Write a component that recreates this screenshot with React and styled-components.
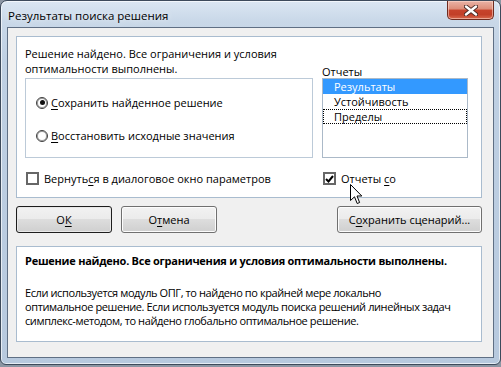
import React from "react";
import styled, { createGlobalStyle } from "styled-components";

const GlobalStyle = createGlobalStyle`
  html, body {
    margin: 0;
    padding: 0;
    background: #8c96a3;
  }
  body {
    font-family: "Open Sans", "Noto Sans", "Liberation Sans", sans-serif;
    font-size: 11px;
    color: #000;
  }
`;

const Frame = styled.div`
  position: relative;
  width: 501px;
  height: 365px;
  box-sizing: border-box;
  border: 1px solid #3d4a5b;
  border-radius: 7px 7px 6px 6px;
  background: linear-gradient(
    180deg,
    #dbe6f2 0px,
    #c9d8e8 20px,
    #bfd0e3 60px,
    #b7c9de 100%
  );
  box-shadow: inset 0 0 0 1px rgba(255, 255, 255, 0.65);
  padding: 0 6px 6px 6px;
  display: flex;
  flex-direction: column;
`;

const TitleBar = styled.div`
  height: 27px;
  display: flex;
  align-items: flex-start;
  padding-left: 1px;
`;

const Title = styled.div`
  margin-top: 7px;
  font-size: 11.5px;
  line-height: 15px;
  color: #000;
  text-shadow: 0 0 6px rgba(255, 255, 255, 0.9);
`;

const CloseButton = styled.div`
  margin-left: auto;
  width: 47px;
  height: 19px;
  box-sizing: border-box;
  border: 1px solid #6e2b1f;
  border-top: none;
  border-radius: 0 0 5px 5px;
  background: linear-gradient(
    180deg,
    #e9b3a6 0%,
    #dc8c78 45%,
    #c7432c 50%,
    #c23f28 75%,
    #d8694e 100%
  );
  box-shadow: inset 0 0 0 1px rgba(255, 220, 210, 0.55);
  display: flex;
  align-items: center;
  justify-content: center;
`;

const Client = styled.div`
  flex: 1;
  border: 1px solid #5f6f84;
  background: #f0f0f0;
  padding: 8px 11px 15px 8px;
  display: flex;
  flex-direction: column;
`;

const Panel = styled.div`
  box-sizing: border-box;
  height: ${(p) => p.$height}px;
  border: 1px solid #a9bccf;
  background: #fff;
`;

const TopGrid = styled.div`
  display: grid;
  grid-template-columns: 288px 146px;
  grid-template-rows: 32px 80px auto;
  column-gap: 9px;
  padding: 9px 13px 0 8px;
`;

const Message = styled.div`
  line-height: 15px;
  padding-top: 0;
`;

const ListLabel = styled.div`
  align-self: end;
  line-height: 15px;
  margin-bottom: -1px;
`;

const GroupBox = styled.div`
  box-sizing: border-box;
  border: 1px solid #bccad8;
  display: flex;
  flex-direction: column;
  gap: 18px;
  padding: 16px 0 0 10px;
`;

const OptionRow = styled.div`
  display: flex;
  align-items: center;
  gap: 3px;
  height: 15px;
  line-height: 15px;
`;

const Radio = styled.span`
  width: 12px;
  height: 12px;
  box-sizing: border-box;
  border-radius: 50%;
  border: 1px solid #3e3e3e;
  box-shadow: inset 0 0 0 1px #9a9a9a;
  background: #fff;
  display: flex;
  align-items: center;
  justify-content: center;

  &::after {
    content: "";
    display: ${(p) => (p.$checked ? "block" : "none")};
    width: 5px;
    height: 5px;
    border-radius: 50%;
    background: #111;
  }
`;

const Check = styled.span`
  width: 13px;
  height: 13px;
  box-sizing: border-box;
  border: 2px solid #676767;
  background: #fff;
  display: flex;
  align-items: center;
  justify-content: center;
`;

const ListBox = styled.div`
  box-sizing: border-box;
  border: 1px solid #abb9c8;
  background: #fff;
  display: flex;
  flex-direction: column;
`;

const ListItem = styled.div`
  height: 15px;
  box-sizing: border-box;
  line-height: 13px;
  padding-left: 10px;
  background: ${(p) => (p.$selected ? "#3399ff" : "transparent")};
  color: ${(p) => (p.$selected ? "#fff" : "#000")};
  border: 1px dotted ${(p) => (p.$focused ? "#000" : "transparent")};
`;

const CheckRow = styled(OptionRow)`
  margin-top: 13px;
  margin-left: 1px;
  gap: 5px;
`;

const ButtonRow = styled.div`
  display: flex;
  gap: 9px;
  margin-top: 8px;
  height: 27px;
`;

const Button = styled.div`
  box-sizing: border-box;
  width: ${(p) => p.$width}px;
  height: 27px;
  border: 1px solid ${(p) => (p.$default ? "#1d1d1d" : "#707070")};
  border-radius: 3px;
  background: linear-gradient(180deg, #f2f2f2 0%, #ebebeb 49%, #dddddd 50%, #cfcfcf 100%);
  box-shadow: inset 0 0 0 1px ${(p) => (p.$default ? "#e8e8e8" : "#fcfcfc")};
  display: flex;
  align-items: center;
  justify-content: center;
  margin-left: ${(p) => (p.$right ? "auto" : "0")};
`;

const Note = styled(Panel)`
  margin-top: 13px;
  padding: 6px 8px 0 8px;
  line-height: 15px;
`;

const NoteTitle = styled.div`
  font-weight: 700;
  letter-spacing: -0.25px;
`;

const NoteText = styled.div`
  margin-top: 18px;
  line-height: 14px;
  letter-spacing: -0.4px;
  white-space: nowrap;
`;

const Cursor = styled.svg`
  position: absolute;
  left: 349px;
  top: 183px;
`;

const Key = styled.span`
  text-decoration: underline;
  text-underline-offset: 2px;
`;

const App = () => {
  return (
    <>
      <GlobalStyle />
      <Frame>
        <TitleBar>
          <Title>Результаты поиска решения</Title>
          <CloseButton>
            <svg width="14" height="11" viewBox="0 0 14 11">
              <path
                d="M2 1.5 L12 9.5 M12 1.5 L2 9.5"
                stroke="#4a2a25"
                strokeWidth="4.2"
                strokeLinecap="round"
              />
              <path
                d="M2 1.5 L12 9.5 M12 1.5 L2 9.5"
                stroke="#fff"
                strokeWidth="2.4"
                strokeLinecap="round"
              />
            </svg>
          </CloseButton>
        </TitleBar>
        <Client>
          <Panel $height={162}>
            <TopGrid>
              <Message>
                Решение найдено. Все ограничения и условия
                <br />
                оптимальности выполнены.
              </Message>
              <ListLabel>
                <Key>О</Key>тчеты
              </ListLabel>
              <GroupBox>
                <OptionRow>
                  <Radio $checked />
                  <span>
                    <Key>С</Key>охранить найденное решение
                  </span>
                </OptionRow>
                <OptionRow>
                  <Radio />
                  <span>
                    <Key>В</Key>осстановить исходные значения
                  </span>
                </OptionRow>
              </GroupBox>
              <ListBox>
                <ListItem $selected>Результаты</ListItem>
                <ListItem>Устойчивость</ListItem>
                <ListItem $focused>Пределы</ListItem>
              </ListBox>
              <CheckRow>
                <Check />
                <span>
                  Вернуть<Key>с</Key>я в диалоговое окно параметров
                </span>
              </CheckRow>
              <CheckRow>
                <Check>
                  <svg width="9" height="8" viewBox="0 0 9 8">
                    <path d="M1 4 L3.5 6.5 L8 1" stroke="#000" strokeWidth="2" fill="none" />
                  </svg>
                </Check>
                <span>
                  Отчеты <Key>с</Key>о
                </span>
              </CheckRow>
            </TopGrid>
          </Panel>
          <ButtonRow>
            <Button $width={96} $default>
              О<Key>К</Key>
            </Button>
            <Button $width={96}>
              О<Key>т</Key>мена
            </Button>
            <Button $width={145} $right>
              С<Key>о</Key>хранить сценарий...
            </Button>
          </ButtonRow>
          <Note $height={96}>
            <NoteTitle>
              Решение найдено. Все ограничения и условия оптимальности выполнены.
            </NoteTitle>
            <NoteText>
              Если используется модуль ОПГ, то найдено по крайней мере локально
              <br />
              оптимальное решение. Если используется модуль поиска решений линейных задач
              <br />
              симплекс-методом, то найдено глобально оптимальное решение.
            </NoteText>
          </Note>
        </Client>
        <Cursor width="13" height="21" viewBox="0 0 13 21">
          <path
            d="M0.5 0.5 L0.5 16.5 L4.5 12.8 L7.2 19.5 L9.6 18.5 L7 12 L11.8 12 Z"
            fill="#fff"
            stroke="#000"
            strokeWidth="1"
          />
        </Cursor>
      </Frame>
    </>
  );
};

export default App;
